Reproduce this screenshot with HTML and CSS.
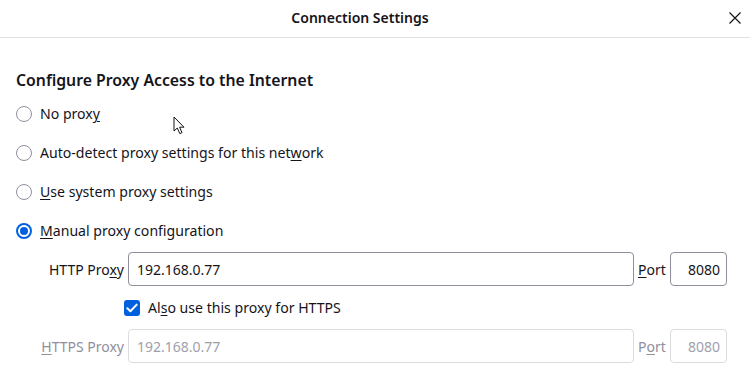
FILE: index.html
```html
<!DOCTYPE html>
<html>
<head>
<meta charset="utf-8">
<link rel="stylesheet" href="styles.css">
</head>
<body>
<div class="dialog">
  <header class="titlebar">
    <span class="title">Connection Settings</span>
    <button class="close" aria-label="Close">
      <svg width="12" height="12" viewBox="0 0 12 12"><path d="M0.5 0.5L11.5 11.5M11.5 0.5L0.5 11.5" stroke="#15141a" stroke-width="1.2" fill="none"/></svg>
    </button>
  </header>
  <main class="content">
    <h2 class="heading">Configure Proxy Access to the Internet</h2>
    <div class="options">
      <label class="option"><span class="radio"></span><span>No prox<u>y</u></span></label>
      <label class="option"><span class="radio"></span><span>Auto-detect proxy settings for this net<u>w</u>ork</span></label>
      <label class="option"><span class="radio"></span><span><u>U</u>se system proxy settings</span></label>
      <label class="option"><span class="radio checked"></span><span><u>M</u>anual proxy configuration</span></label>
    </div>
    <div class="manual">
      <div class="proxy-row">
        <span class="label">HTTP Pro<u>x</u>y</span>
        <div class="field host">192.168.0.77</div>
        <span class="port-label"><u>P</u>ort</span>
        <div class="field port">8080</div>
      </div>
      <label class="check-row"><span class="checkbox"><svg width="12" height="10" viewBox="0 0 12 10"><path d="M1.3 5.2L4.4 8.2L10.7 1.6" stroke="#fff" stroke-width="2" fill="none" stroke-linecap="round" stroke-linejoin="round"/></svg></span><span>Al<u>s</u>o use this proxy for HTTPS</span></label>
      <div class="proxy-row disabled">
        <span class="label"><u>H</u>TTPS Proxy</span>
        <div class="field host">192.168.0.77</div>
        <span class="port-label">P<u>o</u>rt</span>
        <div class="field port">8080</div>
      </div>
    </div>
  </main>
  <svg class="cursor" width="14" height="20" viewBox="0 0 14 20"><path d="M1 1L1 15L4.3 12L6.8 17.6L9 16.7L6.6 11.2L11 11.2Z" fill="#fff" stroke="#15141a" stroke-width="1" stroke-linejoin="round"/></svg>
</div>
</body>
</html>
```

FILE: styles.css
```css
* { box-sizing: border-box; }
html, body {
  margin: 0;
  padding: 0;
  background: #fff;
}
body {
  font-family: "Noto Sans", "Open Sans", sans-serif;
  color: #15141a;
  font-size: 14px;
}
.dialog {
  position: relative;
  width: 750px;
  height: 379px;
  overflow: hidden;
}
.titlebar {
  height: 38px;
  border-bottom: 1px solid #e0e0e6;
  display: flex;
  align-items: center;
  justify-content: center;
  position: relative;
}
.title {
  font-weight: 600;
  font-size: 14px;
  margin-left: -30px;
  margin-top: -2px;
}
.close {
  position: absolute;
  right: 9px;
  top: 12px;
  width: 12px;
  height: 12px;
  padding: 0;
  border: none;
  background: none;
  display: flex;
}
.content {
  padding: 0 16px;
}
.heading {
  margin: 30px 0 0;
  font-size: 15.8px;
  font-weight: 600;
  line-height: 24px;
}
.options {
  display: flex;
  flex-direction: column;
  gap: 15px;
  margin-top: 10px;
}
.option, .check-row {
  display: flex;
  align-items: center;
  gap: 8px;
  line-height: 24px;
  height: 24px;
  font-size: 14.1px;
}
u {
  text-decoration: underline;
  text-underline-offset: 2px;
}
.radio {
  width: 16px;
  height: 16px;
  border-radius: 50%;
  border: 1px solid #8f8f9d;
  flex: none;
  position: relative;
}
.radio.checked {
  border: 2px solid #0061e0;
}
.radio.checked::after {
  content: "";
  position: absolute;
  left: 2px;
  top: 2px;
  width: 8px;
  height: 8px;
  border-radius: 50%;
  background: #0061e0;
}
.manual {
  margin-top: 9px;
  display: flex;
  flex-direction: column;
}
.proxy-row {
  display: flex;
  align-items: center;
  height: 34px;
}
.label {
  width: 112px;
  text-align: right;
  padding-right: 4px;
  flex: none;
}
.field {
  height: 34px;
  border: 1px solid #8f8f9d;
  border-radius: 4px;
  display: flex;
  align-items: center;
  padding: 0 8px;
  flex: none;
}
.host {
  width: 506px;
}
.port-label {
  padding: 0 4px;
  width: 36px;
}
.port {
  width: 57px;
  justify-content: flex-end;
  padding-right: 6px;
}
.check-row {
  margin: 10px 0 9px 108px;
}
.checkbox {
  width: 16px;
  height: 16px;
  border-radius: 3px;
  background: #0061e0;
  display: flex;
  align-items: center;
  justify-content: center;
  flex: none;
}
.disabled {
  color: #8f8f9d;
}
.disabled .field {
  border-color: #dcdce0;
  color: #a0a0aa;
}
.cursor {
  position: absolute;
  left: 173px;
  top: 116px;
}
```
